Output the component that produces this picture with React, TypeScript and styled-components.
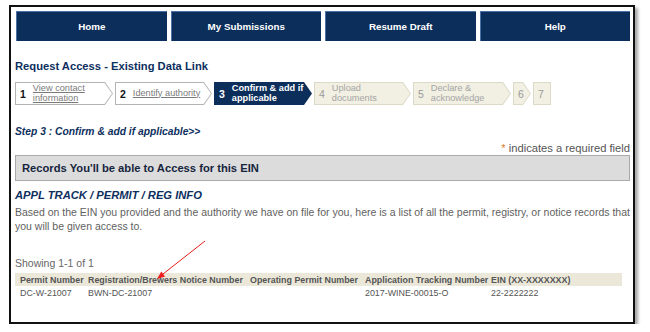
import styled, { createGlobalStyle } from "styled-components";

const GlobalStyle = createGlobalStyle`
    html, body {
        margin: 0;
        padding: 0;
        background: #ffffff;
        font-family: "Liberation Sans", Arial, sans-serif;
    }
`;

const Frame = styled.div`
    position: relative;
    box-sizing: border-box;
    width: 626px;
    height: 319px;
    margin: 5px 0 0 9px;
    padding: 4px 3px 0 4px;
    border: 2px solid #111111;
    box-shadow: 3px 3px 3px rgba(0, 0, 0, 0.35);
    background: #ffffff;
`;

const Nav = styled.nav`
    display: grid;
    grid-template-columns: repeat(4, 1fr);
    gap: 4px;
    margin-left: 1px;
`;

const NavItem = styled.div`
    height: 30px;
    display: flex;
    align-items: center;
    justify-content: center;
    background: #0b2e5a;
    border-top: 1px solid #4a72a8;
    border-left: 1px solid #4a72a8;
    box-sizing: border-box;
    color: #ffffff;
    font-weight: bold;
    font-size: 9.8px;
`;

const Title = styled.h1`
    margin: 18px 0 0 0;
    font-size: 11.2px;
    line-height: 15px;
    color: #0d2f5e;
`;

const Steps = styled.div`
    display: flex;
    gap: 2px;
    margin-top: 8px;
    height: 23px;
`;

type StepState = "done" | "active" | "todo";

const stepColors = {
    done: { border: "#b4b4b4", fill: "#ffffff", num: "#111111", text: "#7a7a7a" },
    active: { border: "#0b2e5a", fill: "#0b2e5a", num: "#ffffff", text: "#ffffff" },
    todo: { border: "#dcd9c8", fill: "#f2f0e3", num: "#9a9a9a", text: "#a5a5a5" },
};

const Step = styled.div<{ $state: StepState; $w: number; $arrow: boolean }>`
    width: ${(p) => p.$w}px;
    box-sizing: border-box;
    padding: 1px;
    background: ${(p) => stepColors[p.$state].border};
    clip-path: ${(p) =>
        p.$arrow
            ? "polygon(0 0, calc(100% - 8px) 0, 100% 50%, calc(100% - 8px) 100%, 0 100%)"
            : "none"};
`;

const StepInner = styled.div<{ $state: StepState; $arrow: boolean }>`
    height: 100%;
    display: flex;
    align-items: center;
    gap: 7px;
    padding-left: 4px;
    background: ${(p) => stepColors[p.$state].fill};
    clip-path: ${(p) =>
        p.$arrow
            ? "polygon(0 0, calc(100% - 7.5px) 0, 100% 50%, calc(100% - 7.5px) 100%, 0 100%)"
            : "none"};
`;

const StepNum = styled.span<{ $state: StepState }>`
    font-size: 10.5px;
    font-weight: ${(p) => (p.$state === "todo" ? "normal" : "bold")};
    color: ${(p) => stepColors[p.$state].num};
`;

const StepLabel = styled.span<{ $state: StepState }>`
    font-size: 9.2px;
    line-height: 9.5px;
    color: ${(p) => stepColors[p.$state].text};
    font-weight: ${(p) => (p.$state === "active" ? "bold" : "normal")};
    text-decoration: ${(p) => (p.$state === "done" ? "underline" : "none")};
`;

const StepLink = styled.div`
    margin-top: 21px;
    font-size: 10.3px;
    font-weight: bold;
    font-style: italic;
    color: #0d2f5e;
`;

const Required = styled.div`
    margin-top: 5px;
    text-align: right;
    font-size: 11.2px;
    line-height: 13px;
    color: #555555;
    span {
        color: #e0802e;
    }
`;

const Panel = styled.div`
    margin-top: 0;
    height: 26px;
    box-sizing: border-box;
    display: flex;
    align-items: center;
    padding-left: 6px;
    background: #dcdcdc;
    border: 1px solid #a9a9a9;
    font-size: 11.2px;
    font-weight: bold;
    color: #15253c;
`;

const SectionTitle = styled.h2`
    margin: 7px 0 0 0;
    font-size: 11.2px;
    line-height: 14px;
    font-style: italic;
    font-weight: bold;
    color: #0d2f5e;
`;

const Para = styled.p`
    margin: 4px -4px 0 0;
    font-size: 10.5px;
    line-height: 13.5px;
    color: #5f5f5f;
`;

const Showing = styled.div`
    margin-top: 24px;
    font-size: 10.5px;
    line-height: 13px;
    color: #666666;
`;

const Table = styled.table`
    margin-top: 3px;
    width: 607px;
    table-layout: fixed;
    border-collapse: collapse;
    font-size: 8.9px;
    color: #555555;
    th {
        background: #ebe8da;
        font-weight: bold;
        text-align: left;
        padding: 0 0 0 5px;
        height: 13px;
        white-space: nowrap;
    }
    td {
        padding: 0 0 0 5px;
        height: 14px;
        white-space: nowrap;
    }
`;

const Arrow = styled.svg`
    position: absolute;
    left: -11px;
    top: -7px;
    pointer-events: none;
`;

const navItems = ["Home", "My Submissions", "Resume Draft", "Help"];

const steps: { n: string; label: string; state: StepState; w: number; arrow: boolean }[] = [
    { n: "1", label: "View contact\ninformation", state: "done", w: 98, arrow: true },
    { n: "2", label: "Identify authority", state: "done", w: 97, arrow: true },
    { n: "3", label: "Confirm & add if\napplicable", state: "active", w: 98, arrow: true },
    { n: "4", label: "Upload\ndocuments", state: "todo", w: 97, arrow: true },
    { n: "5", label: "Declare &\nacknowledge", state: "todo", w: 98, arrow: true },
    { n: "6", label: "", state: "todo", w: 18, arrow: true },
    { n: "7", label: "", state: "todo", w: 18, arrow: false },
];

const columns = [
    "Permit Number",
    "Registration/Brewers Notice Number",
    "Operating Permit Number",
    "Application Tracking Number",
    "EIN (XX-XXXXXXX)",
];

const rows = [["DC-W-21007", "BWN-DC-21007", "", "2017-WINE-00015-O", "22-2222222"]];

const colWidths = [68, 162, 115, 126, 136];

function App() {
    return (
        <>
            <GlobalStyle />
            <Frame>
                <Nav>
                    {navItems.map((item) => (
                        <NavItem key={item}>{item}</NavItem>
                    ))}
                </Nav>
                <Title>Request Access - Existing Data Link</Title>
                <Steps>
                    {steps.map((s) => (
                        <Step key={s.n} $state={s.state} $w={s.w} $arrow={s.arrow}>
                            <StepInner $state={s.state} $arrow={s.arrow}>
                                <StepNum $state={s.state}>{s.n}</StepNum>
                                {s.label && (
                                    <StepLabel $state={s.state}>
                                        {s.label.split("\n").map((line, i) => (
                                            <span key={i}>
                                                {i > 0 && <br />}
                                                {line}
                                            </span>
                                        ))}
                                    </StepLabel>
                                )}
                            </StepInner>
                        </Step>
                    ))}
                </Steps>
                <StepLink>Step 3 : Confirm &amp; add if applicable&gt;&gt;</StepLink>
                <Required>
                    <span>*</span> indicates a required field
                </Required>
                <Panel>Records You'll be able to Access for this EIN</Panel>
                <SectionTitle>APPL TRACK / PERMIT / REG INFO</SectionTitle>
                <Para>
                    Based on the EIN you provided and the authority we have on file for you, here is a list
                    of all the permit, registry, or notice records that you will be given access to.
                </Para>
                <Showing>Showing 1-1 of 1</Showing>
                <Table>
                    <colgroup>
                        {colWidths.map((w, i) => (
                            <col key={i} style={{ width: w }} />
                        ))}
                    </colgroup>
                    <thead>
                        <tr>
                            {columns.map((c) => (
                                <th key={c}>{c}</th>
                            ))}
                        </tr>
                    </thead>
                    <tbody>
                        {rows.map((r) => (
                            <tr key={r[0]}>
                                {r.map((cell, i) => (
                                    <td key={i}>{cell}</td>
                                ))}
                            </tr>
                        ))}
                    </tbody>
                </Table>
                <Arrow width="650" height="332" viewBox="0 0 650 332">
                    <line x1="205" y1="241" x2="163" y2="274" stroke="#ee1c1c" strokeWidth="1" />
                    <polygon points="157,279 165,276.5 161.3,271.6" fill="#ee1c1c" />
                </Arrow>
            </Frame>
        </>
    );
}

export default App;
